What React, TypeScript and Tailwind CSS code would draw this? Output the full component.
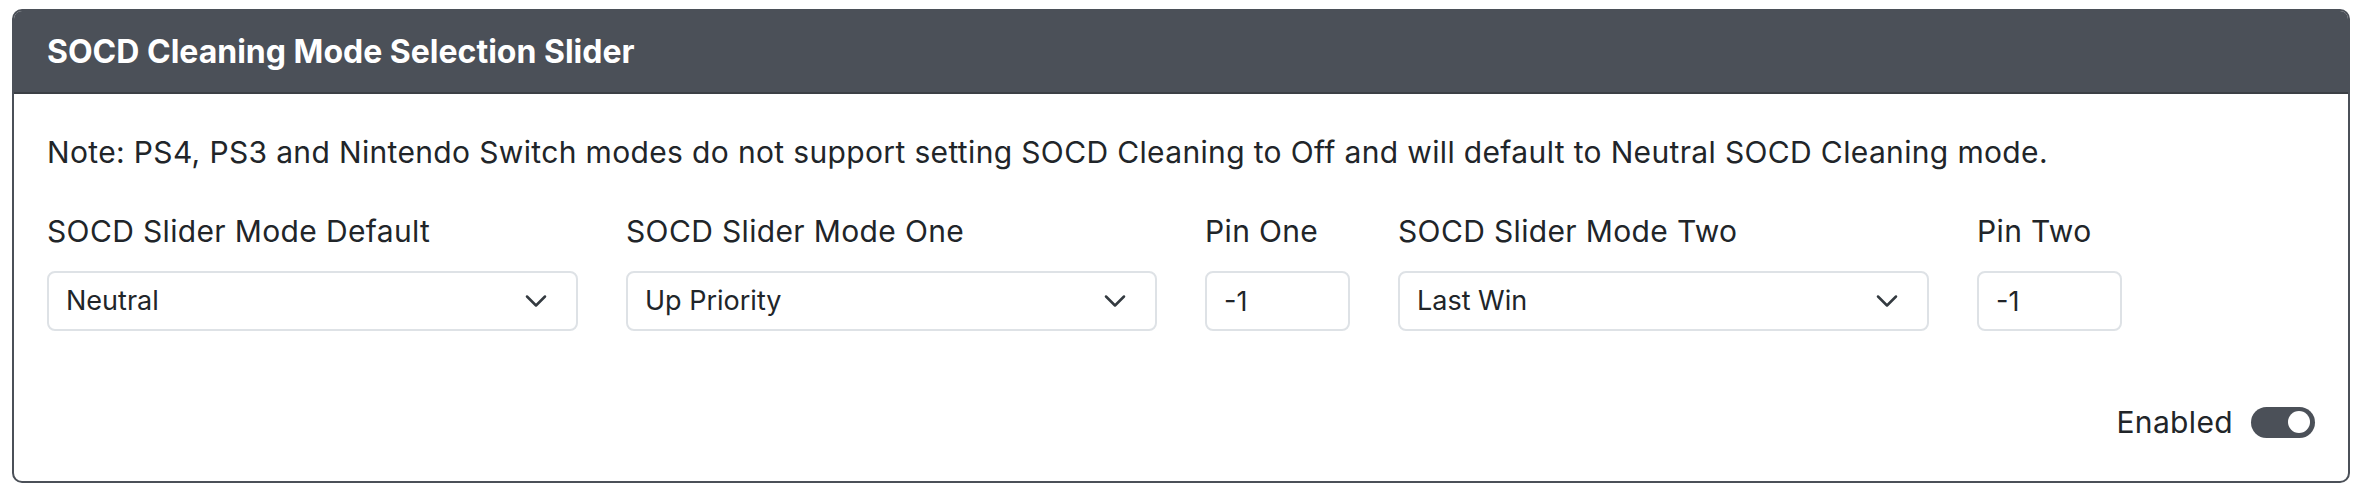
import { useState } from "react";

const SELECT_OPTIONS = ["Up Priority", "Neutral", "Last Win", "First Win", "Off"];

function Chevron() {
  return (
    <svg viewBox="0 0 16 16" className="pointer-events-none absolute right-[30px] top-1/2 h-[24px] w-[24px] -translate-y-1/2" fill="none">
      <path d="m2 5 6 6 6-6" stroke="#343a40" strokeWidth="1.7" strokeLinecap="round" strokeLinejoin="round" />
    </svg>
  );
}

function SelectField({ label, value, span }: { label: string; value: string; span: string }) {
  const [v, setV] = useState(value);
  return (
    <div className={span}>
      <label className="block leading-[42px]">{label}</label>
      <div className="relative mt-[19px]">
        <select
          value={v}
          onChange={(e) => setV(e.target.value)}
          className="h-[60px] w-full appearance-none rounded-[8px] border-2 border-[#dee2e6] bg-white pl-[17px] pr-[60px] text-[27px] tracking-normal text-[#212529] outline-none"
        >
          {SELECT_OPTIONS.map((o) => (
            <option key={o}>{o}</option>
          ))}
        </select>
        <Chevron />
      </div>
    </div>
  );
}

function PinField({ label, value }: { label: string; value: string }) {
  const [v, setV] = useState(value);
  return (
    <div className="col-span-1">
      <label className="block leading-[42px] whitespace-nowrap">{label}</label>
      <input
        value={v}
        onChange={(e) => setV(e.target.value)}
        className="mt-[19px] h-[60px] w-full rounded-[8px] border-2 border-[#dee2e6] bg-white px-[17px] text-[27px] tracking-normal text-[#212529] outline-none"
      />
    </div>
  );
}

export default function App() {
  const [enabled, setEnabled] = useState(true);

  return (
    <div className="bg-white px-[12px] pt-[9px] pb-[12px] font-['Inter','Liberation_Sans',sans-serif] text-[30px] tracking-[0.35px] text-[#212529]">
      <div className="overflow-hidden rounded-[10px] border-2 border-[#4b5058]">
        <div className="flex h-[83px] items-center border-b-2 border-[#3b3f45] bg-[#4b5058] px-[33px]">
          <h2 className="text-[32px] font-bold tracking-normal text-white">SOCD Cleaning Mode Selection Slider</h2>
        </div>

        <div className="px-[33px] pt-[37px] pb-[38px]">
          <p className="leading-[42px]">
            Note: PS4, PS3 and Nintendo Switch modes do not support setting SOCD Cleaning to Off and will default to Neutral SOCD Cleaning mode.
          </p>

          <div className="mt-[37px] grid grid-cols-12 gap-x-[48px]">
            <SelectField span="col-span-3" label="SOCD Slider Mode Default" value="Neutral" />
            <SelectField span="col-span-3" label="SOCD Slider Mode One" value="Up Priority" />
            <PinField label="Pin One" value="-1" />
            <SelectField span="col-span-3" label="SOCD Slider Mode Two" value="Last Win" />
            <PinField label="Pin Two" value="-1" />
          </div>

          <div className="mt-[70px] flex items-center justify-end gap-[18px] leading-[42px]">
            <span>Enabled</span>
            <button
              type="button"
              onClick={() => setEnabled(!enabled)}
              className={`flex h-[31px] w-[64px] items-center rounded-full px-[5px] ${
                enabled ? "justify-end bg-[#4b5058]" : "justify-start border-2 border-[#dee2e6] bg-white"
              }`}
            >
              <span className={`h-[22px] w-[22px] rounded-full ${enabled ? "bg-white" : "bg-[#c4c8cc]"}`} />
            </button>
          </div>
        </div>
      </div>
    </div>
  );
}
